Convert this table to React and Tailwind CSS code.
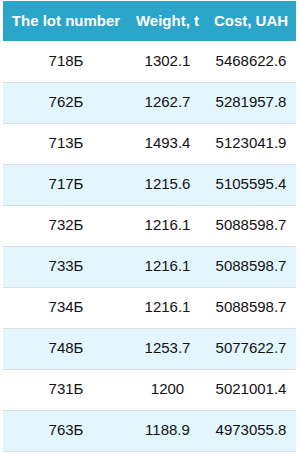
import React from "react";

const rows = [
    ["718Б", "1302.1", "5468622.6"],
    ["762Б", "1262.7", "5281957.8"],
    ["713Б", "1493.4", "5123041.9"],
    ["717Б", "1215.6", "5105595.4"],
    ["732Б", "1216.1", "5088598.7"],
    ["733Б", "1216.1", "5088598.7"],
    ["734Б", "1216.1", "5088598.7"],
    ["748Б", "1253.7", "5077622.7"],
    ["731Б", "1200", "5021001.4"],
    ["763Б", "1188.9", "4973055.8"],
];

export default function App() {
    return (
        <div className="bg-white w-[299px] h-[453px] pt-px pl-[3px]" style={{ fontFamily: '"Liberation Sans", Arial, sans-serif' }}>
            <table className="w-[293px] border-collapse table-fixed text-[15px] text-[#111]">
                <colgroup>
                    <col className="w-[126px]" />
                    <col className="w-[77px]" />
                    <col className="w-[90px]" />
                </colgroup>
                <thead>
                    <tr className="bg-[#2ba5c9] text-white h-[40px]">
                        <th className="font-bold text-center whitespace-nowrap">The lot number</th>
                        <th className="font-bold text-center whitespace-nowrap">Weight, t</th>
                        <th className="font-bold text-center whitespace-nowrap">Cost, UAH</th>
                    </tr>
                </thead>
                <tbody>
                    {rows.map((r, i) => (
                        <tr key={i} className={`h-[41px] border-b border-[#dddddd] ${i % 2 ? "bg-[#e4f6fd]" : "bg-white"}`}>
                            {r.map((c, j) => (
                                <td key={j} className="text-center">{c}</td>
                            ))}
                        </tr>
                    ))}
                </tbody>
            </table>
        </div>
    );
}
